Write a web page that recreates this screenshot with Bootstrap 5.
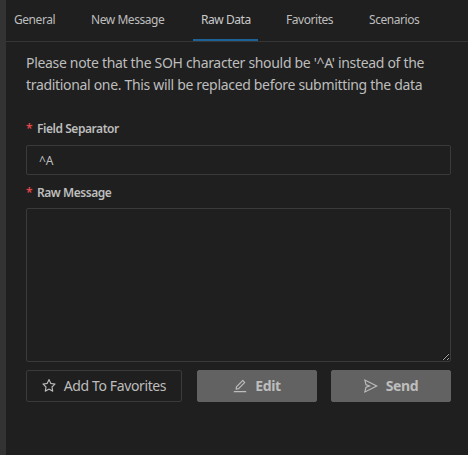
<!DOCTYPE html>
<html lang="en">
<head>
<meta charset="utf-8">
<meta name="viewport" content="width=device-width, initial-scale=1">
<title>Raw Data</title>
<link rel="stylesheet" href="https://cdn.jsdelivr.net/npm/bootstrap@5.3.0/dist/css/bootstrap.min.css">
<style>
  body { font-family: "Noto Sans", "Open Sans", sans-serif; font-size: 14px; line-height: 22px; color: #bdbdbd; background: #1f1f1f; }
  .panel { height: 455px; border-left: 6px solid #333; }
  .tabs { height: 42px; gap: 20px; border-bottom: 1px solid #363636; font-size: 12px; line-height: 20px; }
  .tabs .nav-link { color: #bdbdbd; padding: 10px 0 0 8px; height: 41px; letter-spacing: -.45px; white-space: nowrap; border-radius: 0; }
  .tabs .nav-link.active { border-bottom: 2px solid #1c6296; color: #c9c9c9; }
  .w-general { width: 57px; } .w-new { width: 90px; } .w-raw { width: 65px; } .w-fav { width: 63px; }
  .content-area { padding: 10px 17px 0 20px; }
  .note { letter-spacing: -.32px; white-space: nowrap; height: 44px; margin-bottom: 23px; }
  .field-label { font-size: 12px; font-weight: 600; line-height: 20px; letter-spacing: -.45px; margin-bottom: 6px; }
  .req { color: #e8484a; width: 11px; font-weight: 600; }
  .form-control, .form-control:focus { background: transparent; border: 1px solid #3a3a3a; border-radius: 2px; color: #bdbdbd; font-size: 12px; box-shadow: none; }
  .sep { height: 30px; padding: 4px 12px 3px; }
  .raw { height: 154px; margin-top: -1px; resize: vertical; }
  .btn { --bs-btn-border-radius: 2px; height: 32px; font-size: 14px; line-height: 20px; letter-spacing: -.38px; --bs-btn-color: #bdbdbd; --bs-btn-border-color: #3a3a3a; gap: 8px; padding: 0; white-space: nowrap; }
  .btn svg { width: 14px; height: 14px; fill: currentColor; flex: none; }
  .b-fav { width: 156px; }
  .b-main, .b-main:hover { width: 120px; background: #626262; border-color: #626262; color: #bdbdbd; font-weight: 700; }
  .actions { gap: 14px; }
</style>
<script src="https://cdn.jsdelivr.net/npm/bootstrap@5.3.0/dist/js/bootstrap.bundle.min.js"></script>
</head>
<body class="overflow-hidden">
<main class="panel">
  <nav class="nav tabs flex-nowrap">
    <a class="nav-link w-general"><span>General</span></a>
    <a class="nav-link w-new"><span>New Message</span></a>
    <a class="nav-link w-raw active"><span>Raw Data</span></a>
    <a class="nav-link w-fav"><span>Favorites</span></a>
    <a class="nav-link w-fav"><span>Scenarios</span></a>
  </nav>
  <div class="content-area">
    <p class="note">Please note that the SOH character should be '^A' instead of the<br>traditional one. This will be replaced before submitting the data</p>
    <form>
      <label class="field-label d-flex" for="sep"><span class="req">*</span>Field Separator</label>
      <input class="form-control sep" id="sep" value="^A">
      <label class="field-label d-flex mt-2" for="raw"><span class="req">*</span>Raw Message</label>
      <textarea class="form-control raw" id="raw"></textarea>
      <div class="d-flex justify-content-between mt-2">
        <button type="button" class="btn b-fav d-flex align-items-center justify-content-center">
          <svg viewBox="64 64 896 896"><path d="M908.1 353.1l-253.9-36.9L540.7 86.1c-3.1-6.3-8.2-11.4-14.5-14.5-15.8-7.8-35-1.3-42.9 14.5L369.8 316.2l-253.9 36.9c-7 1-13.4 4.3-18.3 9.3a32.05 32.05 0 00.6 45.3l183.7 179.1-43.4 252.9a31.95 31.95 0 0046.4 33.7L512 754l227.1 119.4c6.2 3.3 13.4 4.4 20.3 3.2 17.4-3 29.1-19.5 26.1-36.9l-43.4-252.9 183.7-179.1c5-4.9 8.3-11.3 9.3-18.3 2.7-17.5-9.5-33.7-27-36.3zM664.8 561.6l36.1 210.3L512 672.7 323.1 772l36.1-210.3-152.8-149L417.6 382 512 190.7 606.4 382l211.2 30.7-152.8 148.9z"/></svg>
          <span>Add To Favorites</span></button>
        <div class="d-flex actions">
        <button type="button" class="btn b-main d-flex align-items-center justify-content-center">
          <svg viewBox="64 64 896 896"><path d="M257.7 752c2 0 4-.2 6-.5L431.9 722c2-.4 3.9-1.3 5.3-2.8l423.9-423.9a9.96 9.96 0 000-14.1L694.9 114.9c-1.9-1.9-4.4-2.9-7.1-2.9s-5.2 1-7.1 2.9L256.8 538.8c-1.5 1.5-2.4 3.3-2.8 5.3l-29.5 168.2a33.5 33.5 0 009.4 29.8c6.6 6.4 14.9 9.9 23.8 9.9zm67.4-174.4L687.8 215l73.3 73.3-362.7 362.6-88.9 15.7 15.6-89zM880 836H144c-17.7 0-32 14.3-32 32v36c0 4.4 3.6 8 8 8h784c4.4 0 8-3.6 8-8v-36c0-17.7-14.3-32-32-32z"/></svg>
          <span>Edit</span></button>
        <button type="button" class="btn b-main d-flex align-items-center justify-content-center">
          <svg viewBox="64 64 896 896"><path fill-rule="evenodd" d="M931.4 498.9L94.9 79.5c-3.4-1.7-7.3-2.1-11-1.2a15.99 15.99 0 00-11.7 19.3l86.2 352.2c1.3 5.3 5.2 9.6 10.4 11.3l147.7 50.7-147.6 50.7c-5.2 1.8-9.1 6-10.3 11.3L72.2 926.5c-.9 3.7-.5 7.6 1.2 10.9 3.9 7.9 13.5 11.1 21.5 7.2l836.5-417c3.1-1.5 5.6-4.1 7.2-7.1 3.9-8 .7-17.6-7.2-21.6zM170.8 826.3l50.3-205.6 295.2-101.3c2.3-.8 4.2-2.6 5-5 1.4-4.2-.8-8.7-5-10.2L221.1 403 171 198.2l628 314.9-628.2 313.2z"/></svg>
          <span>Send</span></button>
        </div>
      </div>
    </form>
  </div>
</main>
</body>
</html>
